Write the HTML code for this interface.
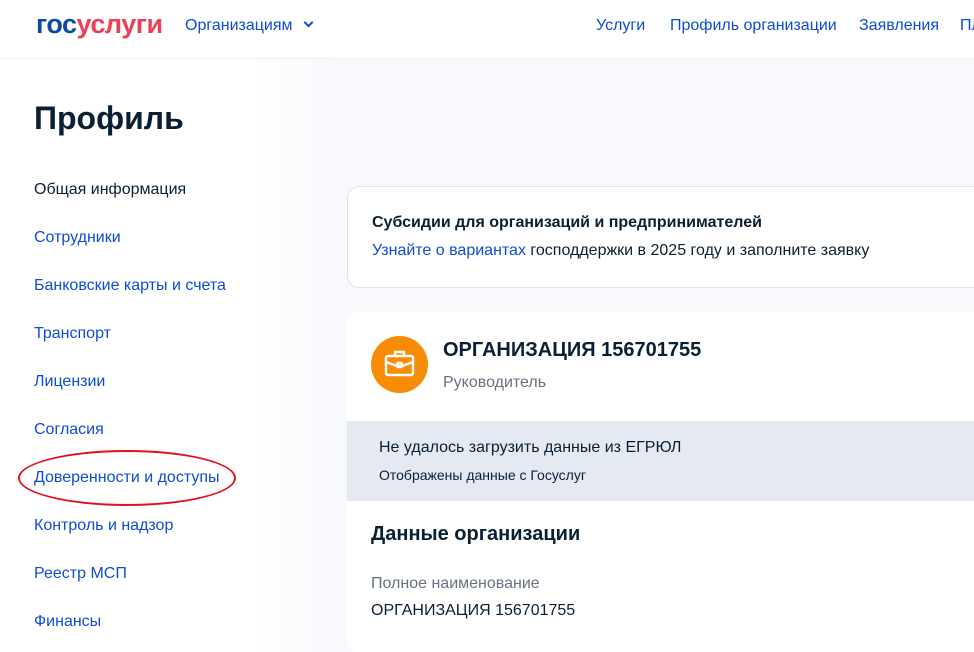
<!DOCTYPE html>
<html><head><meta charset="utf-8"><style>
*{margin:0;padding:0;box-sizing:border-box}
body{width:974px;height:645px;overflow:hidden;background:linear-gradient(90deg,#fff 0,#fff 250px,#f8f9fd 340px);font-family:"Liberation Sans",sans-serif;position:relative;color:#0b1f33}
.hdr{position:absolute;left:0;top:0;width:974px;height:59px;background:#fff;border-bottom:1px solid #eef0f6}
.logo{position:absolute;left:36px;top:9px;font-size:27px;font-weight:bold;letter-spacing:-0.5px}
.a{position:absolute;font-size:16px;color:#0d4cd3;white-space:nowrap}
h1{position:absolute;left:34px;top:100px;font-size:32px;font-weight:bold}
.card{position:absolute;left:347px;background:#fff;border-radius:12px}
</style></head><body>
<div class="hdr">
<div class="logo"><span style="color:#0d4ba0">гос</span><span style="color:#ee3f58">услуги</span></div>
<div class="a" style="left:185px;top:17px">Организациям <span style="display:inline-block;width:7px;height:7px;border-right:2px solid #0d4cd3;border-bottom:2px solid #0d4cd3;transform:rotate(45deg);margin:0 0 4px 8px"></span></div>
<div class="a" style="left:596px;top:17px">Услуги</div>
<div class="a" style="left:670px;top:17px">Профиль организации</div>
<div class="a" style="left:859px;top:17px">Заявления</div>
<div class="a" style="left:960px;top:17px">Пл</div>
</div>
<h1>Профиль</h1>
<div class="a" style="left:34px;top:181px;color:#0b1f33">Общая информация</div>
<div class="a" style="left:34px;top:229px">Сотрудники</div>
<div class="a" style="left:34px;top:277px">Банковские карты и счета</div>
<div class="a" style="left:34px;top:325px">Транспорт</div>
<div class="a" style="left:34px;top:373px">Лицензии</div>
<div class="a" style="left:34px;top:421px">Согласия</div>
<div class="a" style="left:34px;top:469px">Доверенности и доступы</div>
<div class="a" style="left:34px;top:517px">Контроль и надзор</div>
<div class="a" style="left:34px;top:565px">Реестр МСП</div>
<div class="a" style="left:34px;top:613px">Финансы</div>
<div style="position:absolute;left:18px;top:450px;width:218px;height:56px;border:2.5px solid #e3101e;border-radius:50%/50%"></div>
<div class="card" style="top:186px;width:640px;height:102px;border:1px solid #dde3ef">
<div style="position:absolute;left:24px;top:27px;font-size:16px;font-weight:bold">Субсидии для организаций и предпринимателей</div>
<div style="position:absolute;left:24px;top:55px;font-size:16px;white-space:nowrap"><span style="color:#0d4cd3">Узнайте о вариантах</span> господдержки в 2025 году и заполните заявку</div>
</div>
<div class="card" style="top:312px;width:640px;height:340px;overflow:hidden">
<div style="position:absolute;left:24px;top:24px;width:57px;height:57px;border-radius:50%;background:#f98c06">
<svg width="57" height="57" viewBox="0 0 57 57" fill="none" stroke="#fff" stroke-width="2.4"><rect x="15" y="20" width="27" height="19" rx="2"/><path d="M24 20v-4h9v4M15 26l11 4h5l11-4"/><rect x="26" y="27" width="5" height="4" rx="1"/></svg></div>
<div style="position:absolute;left:96px;top:27px;font-size:20px;font-weight:bold">ОРГАНИЗАЦИЯ 156701755</div>
<div style="position:absolute;left:96px;top:62px;font-size:16px;color:#66727f">Руководитель</div>
<div style="position:absolute;left:0;top:109px;width:640px;height:80px;background:#e4e9f2">
<div style="position:absolute;left:32px;top:18px;font-size:16px">Не удалось загрузить данные из ЕГРЮЛ</div>
<div style="position:absolute;left:32px;top:46px;font-size:14px">Отображены данные с Госуслуг</div>
</div>
<div style="position:absolute;left:24px;top:211px;font-size:20px;font-weight:bold">Данные организации</div>
<div style="position:absolute;left:24px;top:263px;font-size:16px;color:#66727f">Полное наименование</div>
<div style="position:absolute;left:24px;top:290px;font-size:16px">ОРГАНИЗАЦИЯ 156701755</div>
</div>
</body></html>
